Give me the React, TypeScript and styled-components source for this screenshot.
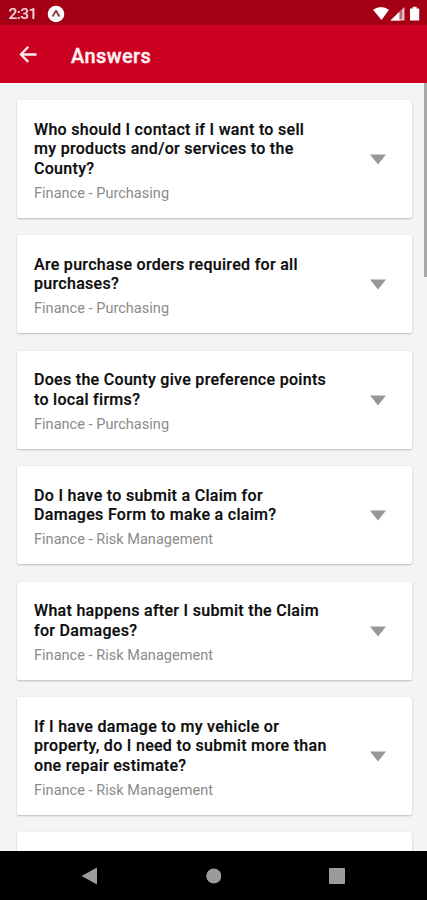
import React from "react";
import styled, { createGlobalStyle } from "styled-components";

const GlobalStyle = createGlobalStyle`
  * { box-sizing: border-box; }
  body { margin: 0; background: #f4f4f4; font-family: Roboto, sans-serif; }
`;

const Screen = styled.div`
  width: 427px;
  height: 900px;
  display: flex;
  flex-direction: column;
  overflow: hidden;
  background: #f4f4f4;
`;

const StatusBar = styled.div`
  height: 25px;
  flex: none;
  display: flex;
  align-items: center;
  padding: 2px 6px 0 8.5px;
  background: #a30015;
`;

const Clock = styled.span`
  width: 38.5px;
  font-size: 15.5px;
  font-weight: 500;
  line-height: 18px;
  letter-spacing: -0.6px;
  color: #f3d9dc;
`;

const StatusIcons = styled.svg`
  margin-left: auto;
  display: block;
`;

const AppBar = styled.header`
  height: 58px;
  flex: none;
  display: flex;
  align-items: center;
  padding: 0 19px;
  background: #cc0020;
`;

const BackIcon = styled.svg`
  display: block;
  margin-bottom: 1px;
`;

const Title = styled.h1`
  margin: 3px 0 0 34px;
  font-size: 20px;
  font-weight: 500;
  line-height: 24px;
  letter-spacing: 0.4px;
  color: #fff1f2;
  -webkit-text-stroke: 0.4px #fff1f2;
`;

const Content = styled.main`
  flex: 1;
  min-height: 0;
  display: flex;
  align-items: flex-start;
  overflow: hidden;
`;

const List = styled.div`
  flex: 1;
  display: flex;
  flex-direction: column;
  gap: 17.3px;
  padding: 17.3px 12.5px 0 17px;
`;

const ScrollThumb = styled.div`
  width: 3px;
  height: 194px;
  flex: none;
  background: #a9a9a9;
`;

const Card = styled.article`
  display: flex;
  align-items: center;
  padding: 19.5px 26px 15.6px 17px;
  border-radius: 2px;
  background: #fff;
  box-shadow: 0 1px 2px rgba(0, 0, 0, 0.22), 0 0 2px rgba(0, 0, 0, 0.06);
`;

const CardText = styled.div`
  flex: 1;
`;

const Question = styled.h2`
  margin: 0;
  font-size: 16px;
  font-weight: 500;
  line-height: 19.5px;
  letter-spacing: 0.3px;
  white-space: pre;
  color: #0c0c0c;
  -webkit-text-stroke: 0.2px #0c0c0c;
`;

const Category = styled.p`
  margin: 7.4px 0 0;
  font-size: 14.5px;
  line-height: 16.7px;
  letter-spacing: 0.03px;
  color: #8b8b8b;
`;

const Caret = styled.svg`
  display: block;
  margin-bottom: 3.5px;
`;

const NavBar = styled.nav`
  height: 49px;
  flex: none;
  display: grid;
  grid-template-columns: repeat(3, 16px);
  column-gap: 108px;
  align-items: center;
  padding-left: 81px;
  background: #000;
`;

const answers: { lines: string[]; category: string }[] = [
  {
    lines: ["Who should I contact if I want to sell", "my products and/or services to the", "County?"],
    category: "Finance - Purchasing",
  },
  { lines: ["Are purchase orders required for all", "purchases?"], category: "Finance - Purchasing" },
  { lines: ["Does the County give preference points", "to local firms?"], category: "Finance - Purchasing" },
  { lines: ["Do I have to submit a Claim for", "Damages Form to make a claim?"], category: "Finance - Risk Management" },
  { lines: ["What happens after I submit the Claim", "for Damages?"], category: "Finance - Risk Management" },
  {
    lines: ["If I have damage to my vehicle or", "property, do I need to submit more than", "one repair estimate?"],
    category: "Finance - Risk Management",
  },
];

const NextCard = styled(Card)`
  height: 98px;
  flex: none;
`;

export default function App() {
  return (
    <>
      <GlobalStyle />
      <Screen>
        <StatusBar>
          <Clock>2:31</Clock>
          <svg width="18" height="18" viewBox="0 0 18 18">
            <circle cx="9" cy="9" r="8.3" fill="#fff" />
            <path d="M5.5 11.5Q7.8 8.4 8.3 6.8Q9 5.2 9.8 6.8Q10.8 9.5 12.6 11.5" fill="none" stroke="#8d3b45" strokeWidth="1.9" />
          </svg>
          <StatusIcons width="48" height="16" viewBox="0 0 48 16">
            <path d="M0 3.8Q8 -1.8 16 3.8L8.5 14Z" fill="#fff" />
            <path d="M17.5 14.5 31.5 1V14.5Z" fill="#e9b9bf" />
            <path d="M17.5 14.5 26.5 5.8V14.5Z" fill="#fff" />
            <path d="M26.5 5.8V13H29V3.5" fill="#b66a74" />
            <path d="M37 2.4h2.6V0.8h4V2.4H46.2V14.5H37Z" fill="#fff" />
          </StatusIcons>
        </StatusBar>
        <AppBar>
          <BackIcon width="18" height="18" viewBox="0 0 18 18" fill="none" stroke="#ffecee" strokeWidth="2.3">
            <path d="M17.5 9.5H2M9.3 1.8 1.9 9.5l7.4 7.4" />
          </BackIcon>
          <Title>Answers</Title>
        </AppBar>
        <Content>
          <List>
            {answers.map(({ lines, category }) => (
              <Card key={lines[0]}>
                <CardText>
                  <Question>{lines.join("\n")}</Question>
                  <Category>{category}</Category>
                </CardText>
                <Caret width="16" height="11" viewBox="0 0 16 11">
                  <path d="M0 0.5H16L8 10.5Z" fill="#979797" />
                </Caret>
              </Card>
            ))}
            <NextCard />
          </List>
          <ScrollThumb />
        </Content>
        <NavBar>
          <svg width="16" height="18" viewBox="0 0 16 18">
            <path d="M0.5 9 16 0.5V17.5Z" fill="#9b9b9b" />
          </svg>
          <svg width="16" height="16" viewBox="0 0 16 16">
            <circle cx="8.8" cy="8" r="7.6" fill="#9b9b9b" />
          </svg>
          <svg width="16" height="16" viewBox="0 0 16 16">
            <rect width="16" height="16" rx="1" fill="#9b9b9b" />
          </svg>
        </NavBar>
      </Screen>
    </>
  );
}
